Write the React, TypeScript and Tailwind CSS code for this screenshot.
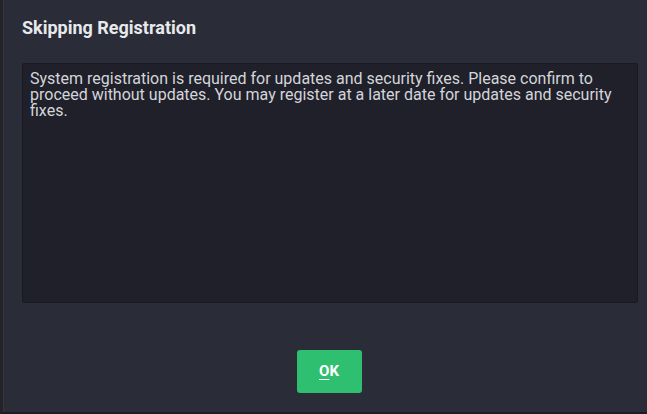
import React from 'react';

export default function App() {
  return (
    <div
      className="w-[647px] h-[414px] bg-[#2a2c37] flex border-l-[3px] border-l-[#22232b] border-b-2 border-b-[#1c1d24]"
      style={{ fontFamily: 'Roboto, "Liberation Sans", sans-serif' }}
    >
      <div className="w-px bg-[#3a3630]" />
      <div className="flex-1 flex flex-col pl-[18px] pr-[9px]">
        <h1 className="text-[18px] font-bold text-[#e8e9ec] pt-[17px] h-[63px] leading-[22px]">
          Skipping Registration
        </h1>
        <div className="h-[240px] bg-[#1f2029] border border-[#191a21] rounded-[2px] px-[7px] pt-[7px]">
          <p className="text-[16px] leading-[16px] text-[#d4d5da]">
            System registration is required for updates and security fixes. Please confirm to proceed without
            updates. You may register at a later date for updates and security fixes.
          </p>
        </div>
        <div className="flex justify-center pt-[47px] pr-[2px]">
          <button className="w-[65px] h-[43px] bg-[#2fbf71] rounded-[3px] text-white text-[15px] font-bold">
            <span className="underline underline-offset-[3px]">O</span>K
          </button>
        </div>
      </div>
    </div>
  );
}
